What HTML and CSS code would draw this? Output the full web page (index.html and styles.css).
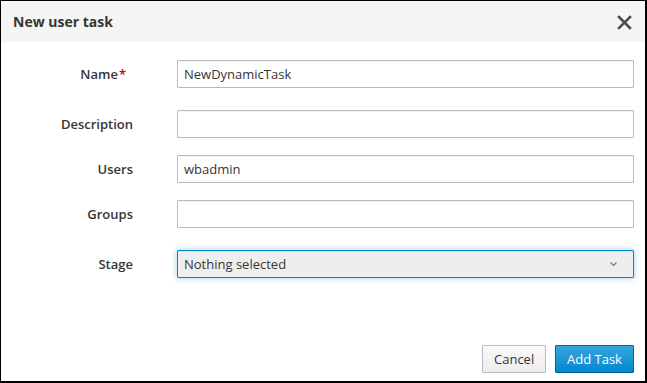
FILE: index.html
```html
<!DOCTYPE html>
<html lang="en">
<head>
    <meta charset="UTF-8">
    <title>New user task</title>
    <link rel="stylesheet" href="styles.css">
</head>
<body>
    <div class="modal">
        <div class="modal-header">
            <span class="modal-title">New user task</span>
            <button class="close" aria-label="Close">
                <svg width="15" height="15" viewBox="0 0 15 15">
                    <path d="M2 2 L13 13 M13 2 L2 13" stroke="#4d4d4d" stroke-width="2.6" stroke-linecap="square"/>
                </svg>
            </button>
        </div>

        <form class="task-form">
            <label class="control-label is-required" for="name">Name<span class="required">*</span></label>
            <input class="form-control" id="name" type="text" value="NewDynamicTask">

            <label class="control-label gap-top" for="description">Description</label>
            <input class="form-control gap-top" id="description" type="text">

            <label class="control-label" for="users">Users</label>
            <input class="form-control" id="users" type="text" value="wbadmin">

            <label class="control-label" for="groups">Groups</label>
            <input class="form-control" id="groups" type="text">

            <label class="control-label gap-top" for="stage">Stage</label>
            <div class="select gap-top" id="stage">
                <span>Nothing selected</span>
                <svg width="9" height="6" viewBox="0 0 9 6">
                    <path d="M1.5 1.5 L4.5 4.5 L7.5 1.5" fill="none" stroke="#777" stroke-width="1.2"/>
                </svg>
            </div>
        </form>

        <div class="modal-footer">
            <button class="btn btn-default">Cancel</button>
            <button class="btn btn-primary">Add Task</button>
        </div>
    </div>
</body>
</html>
```

FILE: styles.css
```css
/* Reset default margin and padding */
html, body {
    margin: 0;
    padding: 0;
    height: 100%;
}

body {
    font-family: "Open Sans", "Liberation Sans", sans-serif;
    font-size: 13px;
    color: #363636;
    background-color: #fff;
}

.modal {
    box-sizing: border-box;
    height: 100%;
    border: 1px solid #000;
    border-bottom-width: 2px;
    border-right-width: 2px;
    display: flex;
    flex-direction: column;
}

/* Header */
.modal-header {
    height: 41px;
    background-color: #f5f5f5;
    display: flex;
    align-items: center;
    justify-content: space-between;
    padding: 0 12px 0 12px;
}

.modal-title {
    font-size: 14px;
    font-weight: 700;
    color: #363636;
}

.close {
    border: none;
    background: none;
    padding: 0;
    display: flex;
    margin-right: 1px;
    margin-top: 1px;
}

/* Form */
.task-form {
    display: grid;
    grid-template-columns: 120px 1fr;
    column-gap: 44px;
    row-gap: 17px;
    align-items: center;
    padding: 18px 11px 0 12px;
}

.control-label {
    text-align: right;
    font-weight: 600;
}

.control-label.is-required {
    padding-right: 7px;
}

.required {
    color: #c00;
    margin-left: 1px;
}

.gap-top {
    margin-top: 5px;
}

.form-control {
    box-sizing: border-box;
    height: 28px;
    border: 1px solid #bbb;
    border-radius: 1px;
    padding: 2px 6px;
    font-family: inherit;
    font-size: 13px;
    color: #363636;
    box-shadow: inset 0 1px 1px rgba(3, 3, 3, 0.05);
}

.select {
    box-sizing: border-box;
    height: 28px;
    border: 1px solid #0088ce;
    border-radius: 1px;
    background-color: #eee;
    padding: 0 15px 0 6px;
    display: flex;
    align-items: center;
    justify-content: space-between;
    box-shadow: inset 0 1px 1px rgba(3, 3, 3, 0.075), 0 0 6px rgba(57, 165, 220, 0.5);
}

/* Footer */
.modal-footer {
    margin-top: auto;
    display: flex;
    justify-content: flex-end;
    gap: 9px;
    padding: 0 11px 8px 0;
}

.btn {
    box-sizing: border-box;
    height: 28px;
    padding: 0 11px;
    font-family: inherit;
    font-size: 13px;
    border-radius: 1px;
    border: 1px solid;
}

.btn-default {
    width: 64px;
    color: #363636;
    background-color: #f1f1f1;
    background-image: linear-gradient(to bottom, #fafafa 0, #ededed 100%);
    border-color: #bbb;
}

.btn-primary {
    width: 79px;
    color: #fff;
    background-color: #0088ce;
    background-image: linear-gradient(to bottom, #39a5dc 0, #0088ce 100%);
    border-color: #00659c;
}
```
